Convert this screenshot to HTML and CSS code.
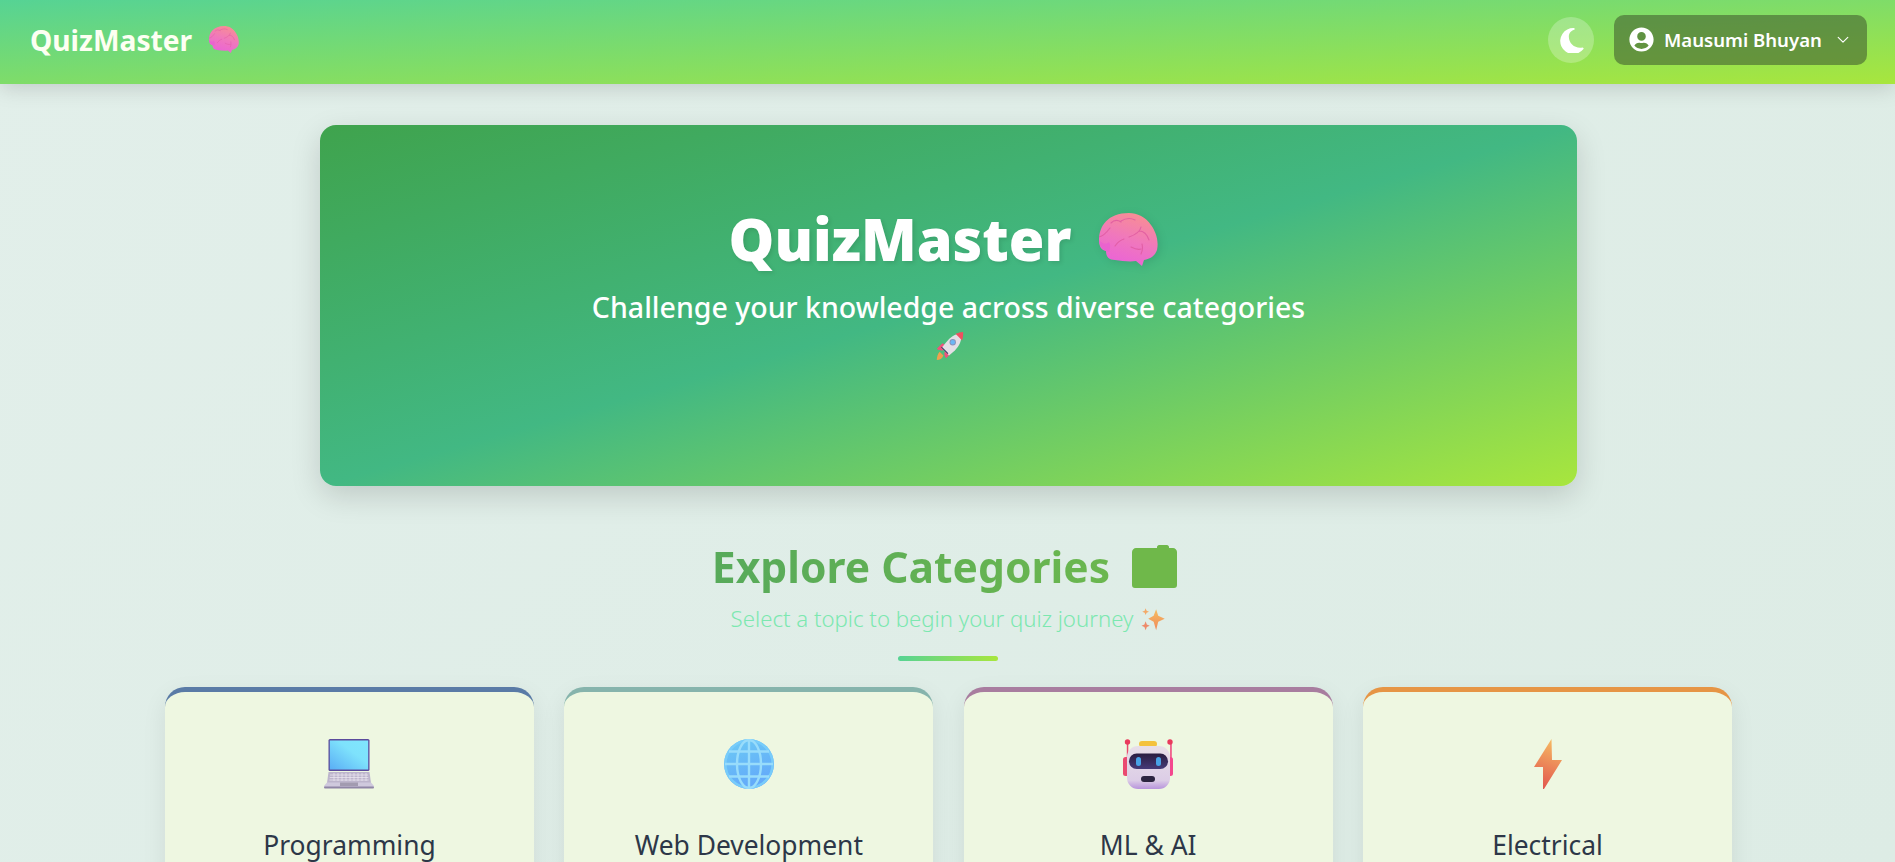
FILE: index.html
```html
<!DOCTYPE html>
<html lang="en">
<head>
<meta charset="utf-8">
<title>QuizMaster</title>
<link rel="stylesheet" href="styles.css">
</head>
<body>
<svg class="defs" width="0" height="0" aria-hidden="true">
  <defs>
    <linearGradient id="brainG" x1="0.7" y1="0" x2="0.35" y2="1"><stop offset="0" stop-color="#f88f92"/><stop offset="0.5" stop-color="#f078bc"/><stop offset="1" stop-color="#ea62d8"/></linearGradient>
    <linearGradient id="screenG" x1="0" y1="1" x2="1" y2="0"><stop offset="0" stop-color="#5aaef5"/><stop offset="0.6" stop-color="#7ee2fc"/><stop offset="1" stop-color="#80e6fd"/></linearGradient>
    <linearGradient id="globeG" x1="0.3" y1="0" x2="0.7" y2="1"><stop offset="0" stop-color="#6cc8f5"/><stop offset="1" stop-color="#62a6fa"/></linearGradient>
    <linearGradient id="boltG" x1="0.6" y1="0" x2="0.4" y2="1"><stop offset="0" stop-color="#f6ba62"/><stop offset="1" stop-color="#e2574f"/></linearGradient>
    <linearGradient id="botG" x1="0" y1="0" x2="0" y2="1"><stop offset="0" stop-color="#e8dfe8"/><stop offset="0.8" stop-color="#dccde6"/><stop offset="1" stop-color="#b894dc"/></linearGradient>
    <linearGradient id="visorG" x1="0" y1="0" x2="0" y2="1"><stop offset="0" stop-color="#2a1d40"/><stop offset="1" stop-color="#463a78"/></linearGradient>
    <linearGradient id="sparkG" x1="0.5" y1="0" x2="0.5" y2="1"><stop offset="0" stop-color="#f6bd60"/><stop offset="1" stop-color="#f08a5c"/></linearGradient>
    <symbol id="brain" viewBox="0 0 59 53">
      <path fill="url(#brainG)" d="M30 0c8 0 17 4 22 12 5 7 8 16 6 25-2 6-7 9-13 10l-2 6-6-5c-6 1-14 0-21-1-6 0-9-3-9-9-5-1-7-5-7-11C0 13 9 0 30 0z"/>
      <path fill="#e85fd0" opacity=".7" d="M0 27c4 5 8 4 10 2 2 3 1 7 0 10-6-1-10-6-10-12z"/>
      <path fill="none" stroke="#df5aa0" stroke-width="1.100" stroke-linecap="round" opacity=".85" d="M12 10c3-3 7-3 10-1M0 24c5-1 8-5 11-9M22 8c5-3 10-3 14-1M42 14c-1 5-6 8-12 10M40 18c5 0 8 3 10 9M32 34c4 2 7 3 10 2M43 31c1 4 0 8-1 10M16 33c2-3 6-6 9-7"/>
    </symbol>
    <symbol id="rocket" viewBox="0 0 32 32">
      <path fill="#f0a04e" d="M6 22l4 4c-1 3-4 5-7 5 0-3 1-7 3-9z"/>
      <path fill="#f0527c" d="M9 13l-6 6c2 2 4 2 6 2l3-6zM19 23l-6 6c-2-2-2-4-2-6l6-3z"/>
      <path fill="#e4dfe6" d="M29 3c1 7-2 13-7 18l-6 5-8-8 5-6C18 6 23 2 29 3z"/>
      <path fill="#ef5060" d="M31 1c.300 3 0 6-1 9l-7-7c3-1 5-2 8-2z"/>
      <path fill="#3a3560" d="M7.500 17.500l.800-.800 7 7-.800.800z"/>
      <circle cx="20" cy="12" r="3.400" fill="#8a93b8"/><circle cx="20" cy="12" r="2.400" fill="#6cb6f5"/>
    </symbol>
    <symbol id="spark" viewBox="0 0 32 32">
      <path fill="url(#sparkG)" d="M19.500 3l2.800 8.500L31 15.500l-8.700 4L19.500 31l-3.300-11.500-7.200-4 7.200-4z"/>
      <path fill="#f3a968" d="M5.500 1.500l1.300 3.400 3.200 1.300-3.200 1.300-1.300 3.300L4.200 7.500 1 6.200l3.200-1.300z"/>
      <path fill="#ee8a6a" d="M5.500 19l1.600 4.400L11 25l-3.900 1.600L5.500 31l-1.600-4.400L0 25l3.900-1.600z"/>
    </symbol>
    <symbol id="laptop" viewBox="0 0 50 50">
      <rect x="4.500" y="0" width="41" height="32" rx="1.500" fill="#5b4b9c"/>
      <rect x="5.800" y="1.500" width="38.400" height="29" fill="url(#screenG)"/>
      <path fill="#bdb5cc" d="M4.500 33h41l1.500 11H3z"/>
      <path fill="#cfc9dd" d="M3 43.500h44l3 3.500v1H0v-1z"/>
      <rect x="0" y="47.500" width="50" height="2" rx="1" fill="#8f86a6"/>
      <path stroke="#eeeaf2" stroke-width=".7" d="M6 36h38M5.700 38.500h38.600M5.400 41h39.200M10 34v8M14 34v8M18 34v8M22 34v8M26 34v8M30 34v8M34 34v8M38 34v8M42 34v8"/>
      <rect x="16" y="43.500" width="18" height="3.500" fill="#a29bb0"/>
    </symbol>
    <symbol id="globe" viewBox="0 0 50 50">
      <circle cx="25" cy="25" r="25" fill="url(#globeG)"/>
      <g fill="none" stroke="#98dcfb" stroke-width="2.400">
        <circle cx="25" cy="25" r="23.600" stroke="#78ccfa"/>
        <ellipse cx="25" cy="25" rx="12" ry="24"/>
        <path d="M25 1v48M1 25h48M5 12.500h40M5 37.500h40"/>
      </g>
    </symbol>
    <symbol id="robot" viewBox="0 0 50 50">
      <rect x="16" y="2" width="18" height="6" rx="3" fill="#f4c23e"/>
      <rect x="3.800" y="3" width="1.500" height="20" fill="#e84a6e"/><rect x="47.200" y="3" width="1.500" height="20" fill="#ef3f7a"/>
      <circle cx="3" cy="3" r="2.700" fill="#e93a5c" transform="translate(1.500 0)"/><circle cx="47" cy="3" r="2.700" fill="#e93a5c"/>
      <rect x="0" y="18" width="6" height="19" rx="2.500" fill="#ea4a70"/><rect x="44" y="18" width="6" height="19" rx="2.500" fill="#f4488e"/>
      <rect x="4" y="7" width="43" height="43" rx="11" fill="url(#botG)"/>
      <rect x="6" y="14.500" width="39" height="15.500" rx="7.700" fill="url(#visorG)"/>
      <rect x="13" y="18" width="5" height="9" rx="2.500" fill="#48a2e6"/><rect x="33" y="18" width="5" height="9" rx="2.500" fill="#48a2e6"/>
      <rect x="18" y="37" width="14" height="6" rx="3" fill="#2c2440"/>
    </symbol>
    <symbol id="bolt" viewBox="0 0 28 50">
      <path fill="url(#boltG)" d="M17.500 0L0 28h9v22h1L28 21H18z"/>
    </symbol>
  </defs>
</svg>

<header class="navbar">
  <a class="brand">QuizMaster <svg class="emoji brand-emoji"><use href="#brain"/></svg></a>
  <div class="nav-actions">
    <button class="theme-btn" aria-label="Toggle theme">
      <svg viewBox="0 0 24 24" class="moon"><path fill="#fff" d="M14.500 1a12 12 0 1 0 9 19.400 1 1 0 0 0-1-1.500C16 20.200 10 15.500 10 9c0-2.800 1.400-5.400 4.900-6.500.9-.4.700-1.500-.4-1.500z"/></svg>
    </button>
    <button class="user-btn">
      <svg viewBox="0 0 512 512" class="user-icon"><path fill="#fff" d="M256 8C119 8 8 119 8 256s111 248 248 248 248-111 248-248S393 8 256 8zm0 96c48.600 0 88 39.400 88 88s-39.400 88-88 88-88-39.400-88-88 39.400-88 88-88zm0 344c-58.700 0-111.300-26.600-146.500-68.200 18.800-35.400 55.600-59.800 98.500-59.800 2.400 0 4.800.4 7.100 1.100 13 4.200 26.600 6.900 40.900 6.900s28-2.700 40.900-6.900c2.300-.7 4.700-1.100 7.100-1.100 42.900 0 79.700 24.400 98.500 59.800C367.300 421.400 314.700 448 256 448z"/></svg>
      <span class="user-name">Mausumi Bhuyan</span>
      <svg viewBox="0 0 16 16" class="chev"><path fill="none" stroke="#fff" stroke-width="1.300" stroke-linecap="round" stroke-linejoin="round" d="M2.500 5l5.500 5.500L13.500 5"/></svg>
    </button>
  </div>
</header>

<main class="page">
  <section class="hero">
    <h1>QuizMaster <svg class="emoji hero-emoji"><use href="#brain"/></svg></h1>
    <p>Challenge your knowledge across diverse categories <svg class="emoji rocket"><use href="#rocket"/></svg></p>
  </section>

  <section class="head">
    <h2><span class="grad">Explore Categories</span>
      <svg class="clip" viewBox="0 0 45 43"><path fill="#6fb84a" d="M25 2c0-1 1-2 2-2h8c1 0 2 1 2 2v1h4c2 0 4 2 4 4v33c0 2-1 3-3 3H3c-2 0-3-1-3-3V7c0-2 2-4 4-4h21z"/></svg>
    </h2>
    <p class="sub">Select a topic to begin your quiz journey <svg class="emoji spark"><use href="#spark"/></svg></p>
    <div class="rule"></div>
  </section>

  <section class="cards">
    <article class="card c-blue"><svg class="card-icon"><use href="#laptop"/></svg><h3>Programming</h3></article>
    <article class="card c-teal"><svg class="card-icon"><use href="#globe"/></svg><h3>Web Development</h3></article>
    <article class="card c-plum"><svg class="card-icon"><use href="#robot"/></svg><h3>ML &amp; AI</h3></article>
    <article class="card c-orange"><svg class="card-icon bolt"><use href="#bolt"/></svg><h3>Electrical</h3></article>
  </section>
</main>
</body>
</html>
```

FILE: styles.css
```css
* { box-sizing: border-box; margin: 0; padding: 0; }
html, body { height: 862px; overflow: hidden; }
body {
  font-family: "Noto Sans", "Open Sans", sans-serif;
  background: linear-gradient(135deg, #e2efea 0%, #ddece5 100%);
  color: #2d3748;
}
.defs { display: block; height: 0; }
.emoji { display: inline-block; vertical-align: middle; }

.navbar {
  height: 84px;
  padding: 0 28px 5px 30px;
  display: flex;
  align-items: center;
  justify-content: space-between;
  background: linear-gradient(to bottom right, #56d394 0%, #a8e63d 100%);
  box-shadow: 0 4px 20px rgba(0,0,0,.15);
}
.brand {
  display: flex;
  align-items: center;
  gap: 17px;
  font-size: 28.200px;
  font-weight: 700;
  color: #fdfff2;
}
.brand-emoji { width: 30px; height: 27px; }

.nav-actions { display: flex; align-items: center; gap: 20px; }
.theme-btn {
  width: 46px; height: 46px;
  border: 0; border-radius: 50%;
  background: rgba(255,255,255,.25);
  display: flex; align-items: center; justify-content: center;
}
.moon { width: 26px; height: 26px; }
.user-btn {
  width: 253px; height: 50px;
  border: 0; border-radius: 10px;
  background: rgba(70,100,50,.62);
  display: flex; align-items: center;
  padding: 0 15px;
  color: #fff;
  font: 600 18.600px "Noto Sans", sans-serif;
}
.user-icon { width: 25px; height: 25px; margin-right: 10px; flex: none; }
.user-name { white-space: nowrap; }
.chev { width: 14px; height: 14px; margin-left: 14px; flex: none; }

.page { display: flex; flex-direction: column; align-items: center; padding: 41px 0 0 2px; }

.hero {
  width: 1257px;
  height: 361px;
  border-radius: 16px;
  background: linear-gradient(to bottom right, #3fa34d 0%, #42b883 50%, #a8e63d 100%);
  box-shadow: 0 10px 30px rgba(0,0,0,.15);
  color: #fff;
  text-align: center;
  padding-top: 78px;
}
.hero h1 {
  padding-right: 10px;
  font-size: 57.600px;
  font-weight: 900;
  line-height: 72px;
  text-shadow: 2px 2px 4px rgba(0,0,0,.1);
  display: flex; justify-content: center; align-items: center; gap: 28px;
}
.hero-emoji { width: 59px; height: 53px; filter: drop-shadow(2px 2px 4px rgba(0,0,0,.1)); }
.hero p {
  width: 760px;
  margin: 12px auto 0;
  font-size: 28.500px;
  font-weight: 500;
  line-height: 41px;
}
.rocket { width: 30px; height: 30px; display: block; margin: 3px auto 0; }

.head { margin-top: 50px; text-align: center; display: flex; flex-direction: column; align-items: center; }
.head h2 {
  padding-right: 8px;
  display: flex; align-items: center; gap: 22px;
  font-size: 42.600px; font-weight: 700; line-height: 60px;
}
.grad {
  background: linear-gradient(90deg, #57aa5a, #6bb74f);
  -webkit-background-clip: text; background-clip: text; color: transparent;
}
.clip { width: 45px; height: 43px; }
.sub {
  margin-top: 7px;
  font-size: 22.200px; line-height: 32px; font-weight: 300;
  color: #7ce8b0;
  display: flex; align-items: center; gap: 8px;
}
.spark { width: 25px; height: 24px; }
.rule {
  margin-top: 21px;
  width: 100px; height: 5px; border-radius: 3px;
  background: linear-gradient(90deg, #56d394, #a8e63d);
}

.cards {
  margin-top: 26px;
  width: 1567px;
  display: grid;
  grid-template-columns: repeat(4, 1fr);
  gap: 30.400px;
}
.card {
  height: 330px;
  background: #eef7e1;
  border-radius: 20px;
  border-top: 5px solid #5a7ba6;
  box-shadow: 0 8px 25px rgba(0,0,0,.08);
  text-align: center;
  padding-top: 47px;
}
.c-teal { border-top-color: #86b4ac; }
.c-plum { border-top-color: #a87d9f; }
.c-orange { border-top-color: #e69545; }
.card-icon { display: block; width: 50px; height: 50px; margin: 0 auto; }
.bolt { width: 28px; }
.card h3 { margin-top: 36px; font-size: 26.400px; font-weight: 400; line-height: 40px; color: #2d3748; }
```
